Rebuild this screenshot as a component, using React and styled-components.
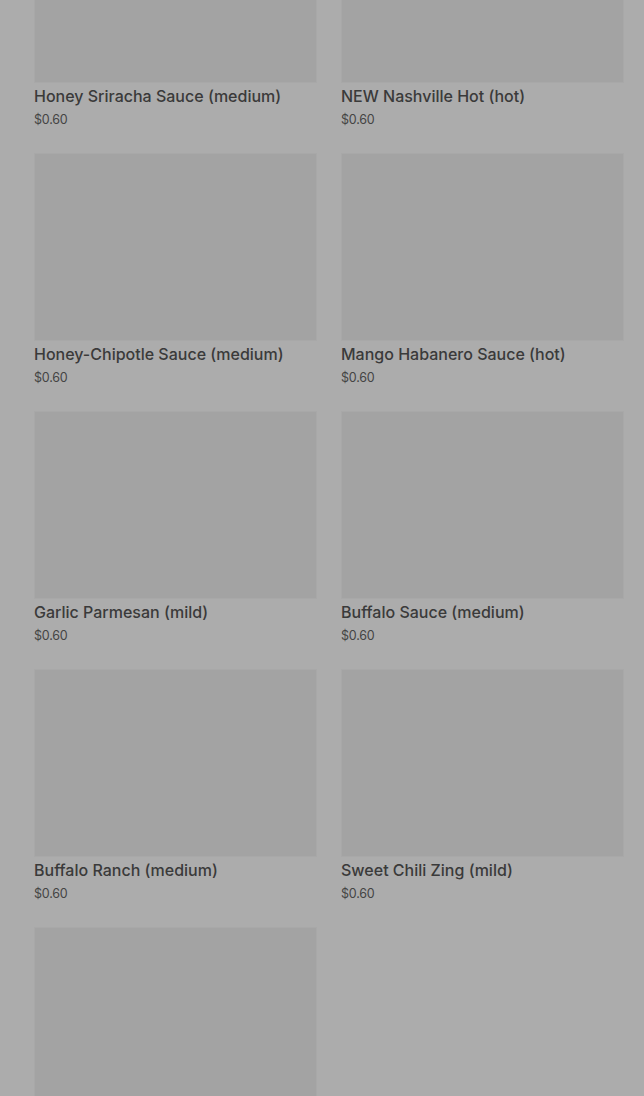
import React from "react";
import styled, { createGlobalStyle } from "styled-components";

const items = [
  { name: "Honey Sriracha Sauce (medium)", price: "$0.60" },
  { name: "NEW Nashville Hot (hot)", price: "$0.60" },
  { name: "Honey-Chipotle Sauce (medium)", price: "$0.60" },
  { name: "Mango Habanero Sauce (hot)", price: "$0.60" },
  { name: "Garlic Parmesan (mild)", price: "$0.60" },
  { name: "Buffalo Sauce (medium)", price: "$0.60" },
  { name: "Buffalo Ranch (medium)", price: "$0.60" },
  { name: "Sweet Chili Zing (mild)", price: "$0.60" },
  { name: "", price: "" },
];

const App = () => {
  return (
    <>
      <GlobalStyle />
      <Page>
        <Grid>
          {items.map((item, i) => (
            <Card key={i}>
              <Thumb />
              {item.name && <Title>{item.name}</Title>}
              {item.price && <Price>{item.price}</Price>}
            </Card>
          ))}
        </Grid>
      </Page>
    </>
  );
};

const GlobalStyle = createGlobalStyle`
  html, body {
    margin: 0;
    padding: 0;
    background: #acacac;
    overflow: hidden;
  }
  body {
    font-family: Inter, "Noto Sans", "Liberation Sans", sans-serif;
  }
`;

const Page = styled.div`
  height: 1096px;
  overflow: hidden;
  background: #acacac;
`;

const Grid = styled.div`
  margin-top: -105px;
  padding: 0 20px 0 34px;
  display: grid;
  grid-template-columns: 283px 283px;
  column-gap: 24px;
  row-gap: 25px;
`;

const Card = styled.div`
  display: flex;
  flex-direction: column;
`;

const Thumb = styled.div`
  height: 188px;
  background: #a3a3a3;
  box-shadow: inset 0 0 0 1px #a8a8a8;
`;

const Title = styled.div`
  margin-top: 3px;
  font-size: 16px;
  line-height: 20px;
  font-weight: 500;
  color: #3a3a3a;
  white-space: nowrap;
`;

const Price = styled.div`
  margin-top: 6px;
  font-size: 12.5px;
  line-height: 16px;
  color: #444444;
  letter-spacing: -0.2px;
`;

export default App;
